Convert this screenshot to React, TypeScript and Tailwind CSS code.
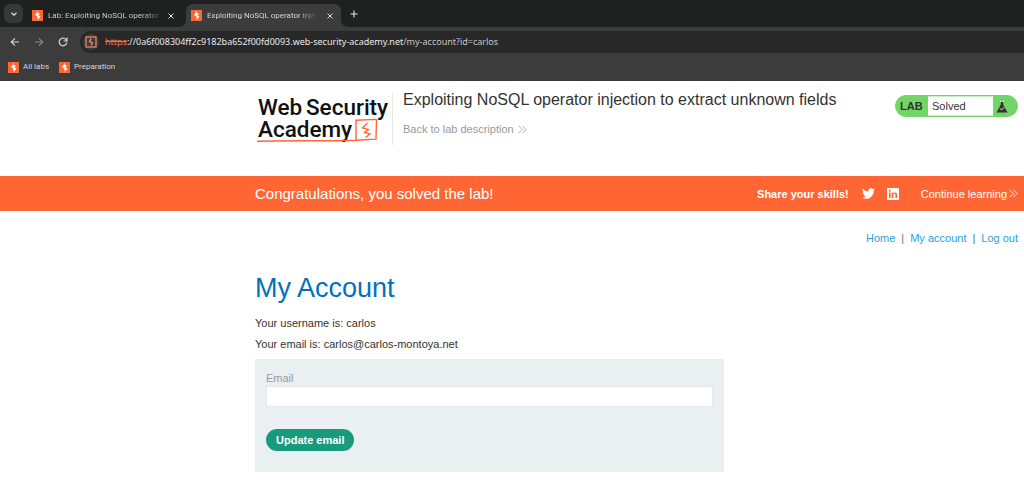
import React from "react";

function BurpIcon({ className = "" }: { className?: string }) {
  return (
    <svg viewBox="0 0 22 22" className={`shrink-0 ${className}`} aria-hidden="true">
      <rect width="22" height="22" fill="#ff6633" />
      <path
        d="M12 1 6 10.5l5.5 1.8L9 15l3 1.2-1.5 5.3L17 13l-4.5-2L16 7.8 11.5 5.6z"
        fill="#fff"
      />
    </svg>
  );
}

function CloseIcon() {
  return (
    <svg viewBox="0 0 8 8" className="size-2" fill="none" stroke="#dedede" strokeWidth="1" aria-hidden="true">
      <path d="M1.5 1.5 6.5 6.5M6.5 1.5 1.5 6.5" />
    </svg>
  );
}

function Chevrons({ className = "" }: { className?: string }) {
  return (
    <svg viewBox="0 0 9 9" className={`size-[9px] shrink-0 ${className}`} fill="none" stroke="currentColor" strokeWidth="0.8" aria-hidden="true">
      <path d="M0.7 0.9 4.2 4.5 0.7 8.1M4.5 0.9 8 4.5 4.5 8.1" />
    </svg>
  );
}

function TabStrip() {
  return (
    <div className="flex h-[27px] items-end bg-[#1f2020] font-['Roboto',sans-serif]">
      <button aria-label="Search tabs" className="mb-1 ml-1 flex size-[19px] items-center justify-center rounded-md bg-[#383838]">
        <svg viewBox="0 0 8 8" className="size-2" fill="none" stroke="#e3e3e3" strokeWidth="1.3" aria-hidden="true">
          <path d="M1.5 2.7 4 5.2 6.5 2.7" />
        </svg>
      </button>
      <div className="flex h-[23px] w-[163px] items-center pb-1 pl-[9px] pr-[11px] pt-1">
        <BurpIcon className="size-[11px]" />
        <span className="ml-[5px] whitespace-nowrap bg-linear-to-r from-[#d6d6d6] from-85% to-[#555555] bg-clip-text text-[8px] leading-[14px] text-transparent">
          Lab: Exploiting NoSQL operator
        </span>
        <button aria-label="Close tab" className="ml-auto">
          <CloseIcon />
        </button>
      </div>
      <div className="relative flex h-[23px] w-[155px] items-center rounded-t-[7px] bg-[#3c3c3c] pb-1 pl-[5px] pr-[7px] pt-1">
        <svg viewBox="0 0 7 7" className="absolute -left-[7px] bottom-0 size-[7px]" aria-hidden="true">
          <path d="M7 0v7H0A7 7 0 0 0 7 0z" fill="#3c3c3c" />
        </svg>
        <svg viewBox="0 0 7 7" className="absolute -right-[7px] bottom-0 size-[7px]" aria-hidden="true">
          <path d="M0 0v7h7A7 7 0 0 1 0 0z" fill="#3c3c3c" />
        </svg>
        <BurpIcon className="size-[11px]" />
        <span className="ml-[5px] whitespace-nowrap bg-linear-to-r from-[#e3e3e3] from-85% to-[#555555] bg-clip-text text-[8px] leading-[14px] text-transparent">
          Exploiting NoSQL operator inje
        </span>
        <button aria-label="Close tab" className="ml-auto">
          <CloseIcon />
        </button>
      </div>
      <button aria-label="New tab" className="mb-[9px] ml-[9px]">
        <svg viewBox="0 0 8 8" className="size-2" fill="none" stroke="#e3e3e3" strokeWidth="1.1" aria-hidden="true">
          <path d="M4 0.5v7M0.5 4h7" />
        </svg>
      </button>
    </div>
  );
}

function Toolbar() {
  return (
    <div className="flex h-[30px] items-center bg-[#3c3c3c] pl-[10px] font-['Noto_Sans',sans-serif]">
      <button aria-label="Back">
        <svg viewBox="0 0 10 10" className="size-[10px]" fill="none" stroke="#d6d6d6" strokeWidth="1.2" aria-hidden="true">
          <path d="M9 5H1.5M5 1.3 1.3 5 5 8.7" />
        </svg>
      </button>
      <button aria-label="Forward" className="ml-[14px]">
        <svg viewBox="0 0 10 10" className="size-[10px]" fill="none" stroke="#858585" strokeWidth="1.2" aria-hidden="true">
          <path d="M1 5h7.5M5 1.3 8.7 5 5 8.7" />
        </svg>
      </button>
      <button aria-label="Reload" className="ml-[14px]">
        <svg viewBox="0 0 10 10" className="size-[10px]" fill="none" stroke="#d6d6d6" strokeWidth="1.2" aria-hidden="true">
          <path d="M8.8 5.6A3.8 3.8 0 1 1 8 2.6L8.9 3.8" />
          <path d="M9 0.6V4H5.6" />
        </svg>
      </button>
      <div className="ml-3 flex h-[22px] flex-1 items-center rounded-l-full bg-[#282828] pl-[3px]">
        <span className="flex size-4 items-center justify-center rounded-full bg-[#3c3c3c]">
          <svg viewBox="0 0 12 12" className="size-3" fill="none" aria-hidden="true">
            <rect x="1" y="1" width="10" height="10" stroke="#f28b66" strokeWidth="1.2" />
            <path d="M6.2 2.6 4.4 5.6 7.5 6.6 6 9.4" stroke="#f28b66" strokeWidth="1.2" />
          </svg>
        </span>
        <span className="ml-1.5 text-[9px] leading-[14px] text-[#c7c7c7]">
          <span className="text-[#e8704a] line-through">https</span>
          <span className="text-[#e8e8e8]">://0a6f008304ff2c9182ba652f00fd0093.web-security-academy.net</span>
          /my-account?id=carlos
        </span>
      </div>
    </div>
  );
}

function Bookmarks() {
  return (
    <nav aria-label="Bookmarks" className="flex h-6 items-center gap-[10px] bg-[#3c3c3c] pb-1 pl-2 font-['Roboto',sans-serif] text-[8px] leading-[14px] text-[#d6d6d6]">
      <a href="#labs" className="flex items-center gap-1">
        <BurpIcon className="size-[11px]" />
        All labs
      </a>
      <a href="#preparation" className="flex items-center gap-1">
        <BurpIcon className="size-[11px]" />
        Preparation
      </a>
    </nav>
  );
}

function AcademyLogo() {
  return (
    <svg viewBox="0 0 137 52" className="h-[52px] w-[137px]" role="img" aria-label="Web Security Academy">
      <g fill="#111" fontFamily="Roboto, sans-serif" fontWeight="500" fontSize="22.5">
        <text x="3" y="22">Web</text>
        <text x="51" y="22">Security</text>
        <text x="3" y="44">Academy</text>
      </g>
      <path d="M2 48.2C30 47.2 70 48.2 101 47.2V27.2L121.5 26.4 121 46.2 101 47.2" fill="none" stroke="#ff6633" strokeWidth="1.4" />
      <path d="M112.5 30 107.5 34.8 113.5 36.6 109.5 39.2 115 41 110.5 44.5" fill="none" stroke="#ff6633" strokeWidth="1.4" />
    </svg>
  );
}

function LabStatus() {
  return (
    <div className="flex h-[22px] w-[123px] items-stretch overflow-hidden rounded-full border border-[#72d568] bg-[#72d568] text-[11px] leading-5 text-[#333332]">
      <strong className="w-8 pl-1">LAB</strong>
      <span className="w-[65px] border-y border-[#c9efc5] bg-white pl-1 leading-[18px]">Solved</span>
      <svg viewBox="0 0 12 16" className="ml-[3px] h-4 w-3 self-center" aria-hidden="true">
        <path d="M4.8 4h2.4v2.4L11.5 14.6H.5L4.8 6.4z" fill="#333332" />
        <path d="M4 3.4h1.4M6.6 3.4H8" stroke="#fff" strokeWidth="1.2" />
        <path d="M6 .8v3" stroke="#7f9f7c" />
        <path d="M4 10.4 5.5 12 8.2 9.2" fill="none" stroke="#d8f3d5" />
      </svg>
    </div>
  );
}

function TwitterIcon() {
  return (
    <svg viewBox="0 0 24 24" className="size-[13px]" fill="#fff" aria-hidden="true">
      <path d="M23.95 4.57a10 10 0 0 1-2.82.77 4.96 4.96 0 0 0 2.16-2.72c-.95.55-2 .95-3.13 1.18a4.92 4.92 0 0 0-8.38 4.48C7.69 8.1 4.07 6.13 1.64 3.16a4.92 4.92 0 0 0 1.52 6.57 4.9 4.9 0 0 1-2.23-.61v.06a4.92 4.92 0 0 0 3.95 4.83 5 5 0 0 1-2.21.08 4.94 4.94 0 0 0 4.6 3.42A9.87 9.87 0 0 1 0 19.54a13.99 13.99 0 0 0 7.55 2.21c9.05 0 14-7.5 14-13.98 0-.21 0-.42-.02-.63a9.94 9.94 0 0 0 2.42-2.57z" />
    </svg>
  );
}

function LinkedInIcon() {
  return (
    <svg viewBox="0 0 12 12" className="size-3" aria-hidden="true">
      <rect width="12" height="12" rx="0.8" fill="#fff" />
      <path d="M1.9 4.5h1.7v5.6H1.9zM2.75 1.8a1 1 0 1 1 0 2 1 1 0 0 1 0-2zM4.7 4.5h1.6v.8c.3-.5.9-.9 1.8-.9 1.6 0 2 1.1 2 2.5v3.2H8.4V7.2c0-.7 0-1.4-.9-1.4s-1.1.7-1.1 1.4v2.9H4.7z" fill="#ff6633" />
    </svg>
  );
}

export default function App() {
  return (
    <div className="min-h-screen bg-white font-['Liberation_Sans',Arial,sans-serif] text-[11px] leading-4 text-[#333332]">
      <TabStrip />
      <Toolbar />
      <Bookmarks />

      <header className="flex h-[95px] items-start pl-[255px] pr-1.5">
        <div className="mt-3 border-r border-[#e8e8e8]">
          <AcademyLogo />
        </div>
        <div className="ml-[10px] mt-2 flex-1">
          <h2 className="text-base leading-[22px]">Exploiting NoSQL operator injection to extract unknown fields</h2>
          <a href="#description" className="mt-[10px] flex items-center gap-1 text-[#999]">
            Back to lab description
            <Chevrons />
          </a>
        </div>
        <div className="mt-[14px]">
          <LabStatus />
        </div>
      </header>

      <section className="flex h-[35px] items-center bg-[#ff6633] pl-[255px] pr-1.5 text-white">
        <h4 className="flex-1 text-[15px]">Congratulations, you solved the lab!</h4>
        <strong>Share your skills!</strong>
        <a href="#twitter" aria-label="Share on Twitter" className="ml-[13px]">
          <TwitterIcon />
        </a>
        <a href="#linkedin" aria-label="Share on LinkedIn" className="ml-3">
          <LinkedInIcon />
        </a>
        <a href="#continue" className="ml-[22px] flex items-center gap-0.5">
          Continue learning
          <Chevrons />
        </a>
      </section>

      <main className="pl-[255px] pr-1.5">
        <nav aria-label="Account" className="flex justify-end gap-1.5 pt-[19px] text-[#29a0dd]">
          <a href="#home">Home</a>
          <span className="text-[#8a6a4a]">|</span>
          <a href="#account">My account</a>
          <span className="text-[#3d6f9c]">|</span>
          <a href="#logout">Log out</a>
        </nav>
        <h1 className="mt-6 text-[27px] leading-9 text-[#0071bc]">My Account</h1>
        <p className="mt-[9px]">Your username is: carlos</p>
        <p className="mt-[5px]">Your email is: carlos@carlos-montoya.net</p>
        <form className="mt-[7px] w-[469px] max-w-full bg-[#eaeff2] px-[11px] pb-[21px] pt-[11px]" onSubmit={(e) => e.preventDefault()}>
          <label htmlFor="email" className="block text-[#999]">
            Email
          </label>
          <input id="email" type="email" className="block h-[21px] w-full border border-[#e3e8eb] bg-white px-1 outline-none" />
          <button type="submit" className="mt-[22px] h-[22px] rounded-full bg-[#189b7d] px-[10px] font-bold text-white">
            Update email
          </button>
        </form>
      </main>
    </div>
  );
}
